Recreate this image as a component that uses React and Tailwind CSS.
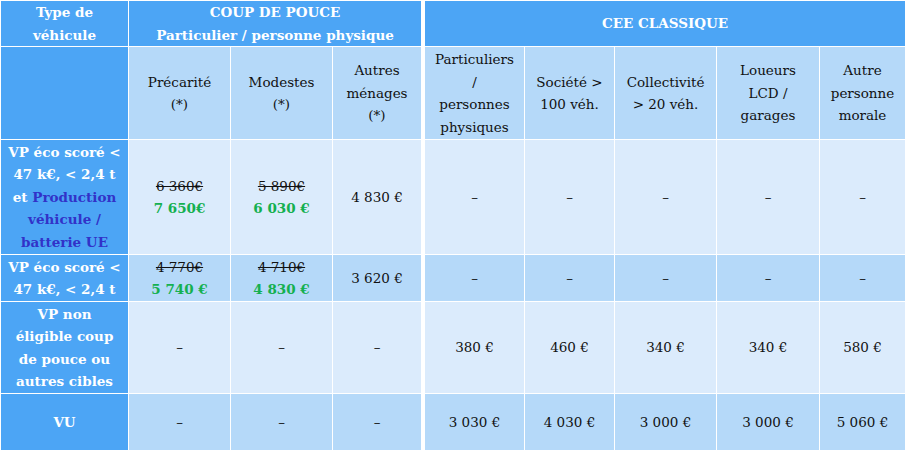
import React from 'react';

const DARK = 'bg-[#4ca5f5]';
const MID = 'bg-[#b5d9f9]';
const LIGHT = 'bg-[#dbebfc]';

const Cell = ({ className = '', children }) => (
  <div className={`flex flex-col items-center justify-center text-center leading-[22.5px] ${className}`}>
    {children}
  </div>
);

const Old = ({ children }) => <span className="line-through">{children}</span>;
const New = ({ children }) => <span className="font-bold text-[#14b050]">{children}</span>;

const Dash = () => <span>–</span>;

export default function App() {
  const bodyRows = [
    { bg: LIGHT, values: [<Dash />, <Dash />, <Dash />, <Dash />, <Dash />] },
    { bg: MID, values: [<Dash />, <Dash />, <Dash />, <Dash />, <Dash />] },
    { bg: LIGHT, values: ['380 €', '460 €', '340 €', '340 €', '580 €'] },
    { bg: MID, values: ['3 030 €', '4 030 €', '3 000 €', '3 000 €', '5 060 €'] },
  ];

  return (
    <div
      className="flex gap-1 bg-white p-px w-[906px] h-[451px] text-[13.5px] text-[#111]"
      style={{ fontFamily: '"DejaVu Serif", "Liberation Serif", serif' }}
    >
      {/* Coup de pouce */}
      <div className="grid grid-cols-[127px_101px_101px_88px] grid-rows-[45px_92px_114px_46px_91px_56px] gap-px">
        <Cell className={`${DARK} font-bold text-white`}>
          <span>Type de</span>
          <span>véhicule</span>
        </Cell>
        <Cell className={`${DARK} col-span-3 font-bold text-white`}>
          <span>COUP DE POUCE</span>
          <span>Particulier / personne physique</span>
        </Cell>

        <div className={DARK} />
        <Cell className={MID}>
          <span>Précarité</span>
          <span>(*)</span>
        </Cell>
        <Cell className={MID}>
          <span>Modestes</span>
          <span>(*)</span>
        </Cell>
        <Cell className={MID}>
          <span>Autres</span>
          <span>ménages</span>
          <span>(*)</span>
        </Cell>

        <Cell className={`${DARK} font-bold text-white`}>
          <span>VP éco scoré &lt;</span>
          <span>47 k€, &lt; 2,4 t</span>
          <span>
            et <span className="text-[#3232c8]">Production</span>
          </span>
          <span className="text-[#3232c8]">véhicule /</span>
          <span className="text-[#3232c8]">batterie UE</span>
        </Cell>
        <Cell className={LIGHT}>
          <Old>6 360€</Old>
          <New>7 650€</New>
        </Cell>
        <Cell className={LIGHT}>
          <Old>5 890€</Old>
          <New>6 030 €</New>
        </Cell>
        <Cell className={LIGHT}>4 830 €</Cell>

        <Cell className={`${DARK} font-bold text-white`}>
          <span>VP éco scoré &lt;</span>
          <span>47 k€, &lt; 2,4 t</span>
        </Cell>
        <Cell className={`${MID} leading-[21px]`}>
          <Old>4 770€</Old>
          <New>5 740 €</New>
        </Cell>
        <Cell className={`${MID} leading-[21px]`}>
          <Old>4 710€</Old>
          <New>4 830 €</New>
        </Cell>
        <Cell className={MID}>3 620 €</Cell>

        <Cell className={`${DARK} font-bold text-white`}>
          <span>VP non</span>
          <span>éligible coup</span>
          <span>de pouce ou</span>
          <span>autres cibles</span>
        </Cell>
        <Cell className={LIGHT}><Dash /></Cell>
        <Cell className={LIGHT}><Dash /></Cell>
        <Cell className={LIGHT}><Dash /></Cell>

        <Cell className={`${DARK} font-bold text-white`}>VU</Cell>
        <Cell className={MID}><Dash /></Cell>
        <Cell className={MID}><Dash /></Cell>
        <Cell className={MID}><Dash /></Cell>
      </div>

      {/* CEE classique */}
      <div className="grid grid-cols-[99px_89px_101px_102px_85px] grid-rows-[45px_92px_114px_46px_91px_56px] gap-px">
        <Cell className={`${DARK} col-span-5 font-bold text-white`}>CEE CLASSIQUE</Cell>

        <Cell className={MID}>
          <span>Particuliers</span>
          <span>/</span>
          <span>personnes</span>
          <span>physiques</span>
        </Cell>
        <Cell className={MID}>
          <span>Société &gt;</span>
          <span>100 véh.</span>
        </Cell>
        <Cell className={MID}>
          <span>Collectivité</span>
          <span>&gt; 20 véh.</span>
        </Cell>
        <Cell className={MID}>
          <span>Loueurs</span>
          <span>LCD /</span>
          <span>garages</span>
        </Cell>
        <Cell className={MID}>
          <span>Autre</span>
          <span>personne</span>
          <span>morale</span>
        </Cell>

        {bodyRows.map((row, i) =>
          row.values.map((v, j) => (
            <Cell key={`${i}-${j}`} className={row.bg}>
              {v}
            </Cell>
          ))
        )}
      </div>
    </div>
  );
}
